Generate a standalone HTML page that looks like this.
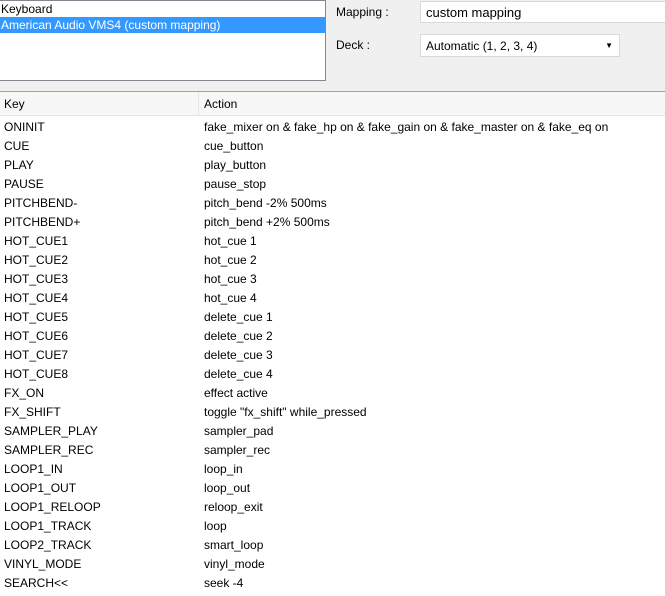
<!DOCTYPE html>
<html><head><style>
body{margin:0;width:665px;height:596px;background:#fff;font-family:"Liberation Sans",sans-serif;font-size:12px;color:#000;overflow:hidden;position:relative}
.top{position:absolute;left:0;top:0;width:665px;height:91px;background:#f0f0f0;border-bottom:1px solid #a0a0a0}
.list{position:absolute;left:-1px;top:0;width:325px;height:79px;background:#fff;border:1px solid #828790}
.list div{height:16px;line-height:17px;padding-left:1px}
.sel{background:#3399ff;color:#fff}
.lbl{position:absolute;left:336px}
.inp{position:absolute;left:420px;background:#fff;border:1px solid #d9d9d9;padding-left:5px;box-sizing:border-box}
.hdr{position:absolute;top:92px;left:0;width:665px;height:23px;background:#f7f7f7;border-bottom:1px solid #e5e5e5;line-height:24px}
.hdr span{position:absolute}
.rows{position:absolute;top:118px;left:0}
.r{height:19px;line-height:19px;position:relative;width:665px}
.r span{position:absolute}
</style></head><body>
<div class="top">
<div class="list"><div>Keyboard</div><div class="sel">American Audio VMS4 (custom mapping)</div></div>
<div class="lbl" style="top:5px">Mapping :</div>
<div class="inp" style="top:1px;width:246px;height:22px;line-height:21px;font-size:13px">custom mapping</div>
<div class="lbl" style="top:38px">Deck :</div>
<div class="inp" style="top:34px;width:200px;height:23px;line-height:22px">Automatic (1, 2, 3, 4)<span style="position:absolute;right:6px;top:0;font-size:8px">&#9660;</span></div>
</div>
<div class="hdr"><span style="left:4px">Key</span><span style="left:198px;top:0;height:23px;border-left:1px solid #e5e5e5"></span><span style="left:204px">Action</span></div>
<div class="rows">
<div class="r"><span style="left:4px">ONINIT</span><span style="left:204px">fake_mixer on &amp; fake_hp on &amp; fake_gain on &amp; fake_master on &amp; fake_eq on</span></div>
<div class="r"><span style="left:4px">CUE</span><span style="left:204px">cue_button</span></div>
<div class="r"><span style="left:4px">PLAY</span><span style="left:204px">play_button</span></div>
<div class="r"><span style="left:4px">PAUSE</span><span style="left:204px">pause_stop</span></div>
<div class="r"><span style="left:4px">PITCHBEND-</span><span style="left:204px">pitch_bend -2% 500ms</span></div>
<div class="r"><span style="left:4px">PITCHBEND+</span><span style="left:204px">pitch_bend +2% 500ms</span></div>
<div class="r"><span style="left:4px">HOT_CUE1</span><span style="left:204px">hot_cue 1</span></div>
<div class="r"><span style="left:4px">HOT_CUE2</span><span style="left:204px">hot_cue 2</span></div>
<div class="r"><span style="left:4px">HOT_CUE3</span><span style="left:204px">hot_cue 3</span></div>
<div class="r"><span style="left:4px">HOT_CUE4</span><span style="left:204px">hot_cue 4</span></div>
<div class="r"><span style="left:4px">HOT_CUE5</span><span style="left:204px">delete_cue 1</span></div>
<div class="r"><span style="left:4px">HOT_CUE6</span><span style="left:204px">delete_cue 2</span></div>
<div class="r"><span style="left:4px">HOT_CUE7</span><span style="left:204px">delete_cue 3</span></div>
<div class="r"><span style="left:4px">HOT_CUE8</span><span style="left:204px">delete_cue 4</span></div>
<div class="r"><span style="left:4px">FX_ON</span><span style="left:204px">effect active</span></div>
<div class="r"><span style="left:4px">FX_SHIFT</span><span style="left:204px">toggle "fx_shift" while_pressed</span></div>
<div class="r"><span style="left:4px">SAMPLER_PLAY</span><span style="left:204px">sampler_pad</span></div>
<div class="r"><span style="left:4px">SAMPLER_REC</span><span style="left:204px">sampler_rec</span></div>
<div class="r"><span style="left:4px">LOOP1_IN</span><span style="left:204px">loop_in</span></div>
<div class="r"><span style="left:4px">LOOP1_OUT</span><span style="left:204px">loop_out</span></div>
<div class="r"><span style="left:4px">LOOP1_RELOOP</span><span style="left:204px">reloop_exit</span></div>
<div class="r"><span style="left:4px">LOOP1_TRACK</span><span style="left:204px">loop</span></div>
<div class="r"><span style="left:4px">LOOP2_TRACK</span><span style="left:204px">smart_loop</span></div>
<div class="r"><span style="left:4px">VINYL_MODE</span><span style="left:204px">vinyl_mode</span></div>
<div class="r"><span style="left:4px">SEARCH&lt;&lt;</span><span style="left:204px">seek -4</span></div>
</div>
</body></html>
